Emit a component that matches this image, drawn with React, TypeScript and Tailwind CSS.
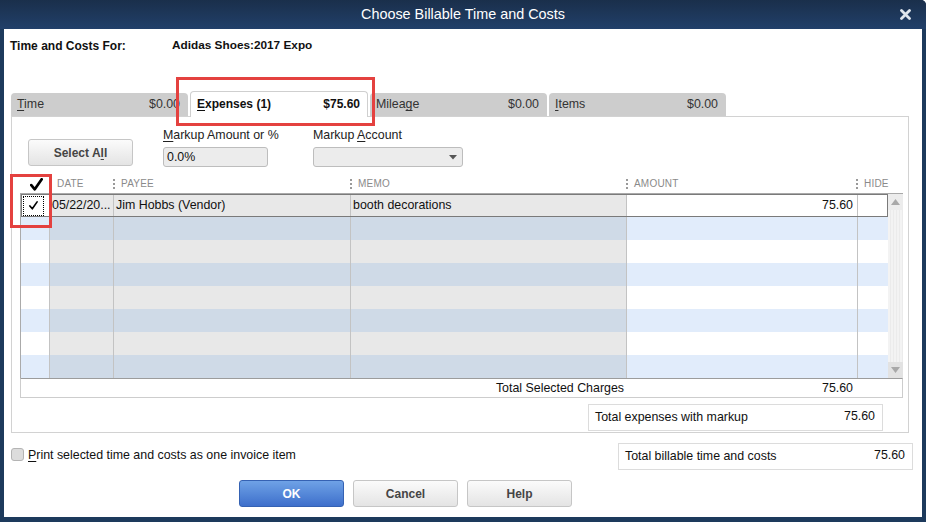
import React from "react";

const font = "font-['Liberation_Sans',Arial,sans-serif]";

const tabs = [
  { pre: "", key: "T", post: "ime", amount: "$0.00", active: false },
  { pre: "", key: "E", post: "xpenses (1)", amount: "$75.60", active: true },
  { pre: "Milea", key: "g", post: "e", amount: "$0.00", active: false },
  { pre: "", key: "I", post: "tems", amount: "$0.00", active: false },
];

function Check({ size = 12, weight = 2.4 }: { size?: number; weight?: number }) {
  return (
    <svg width={size} height={size} viewBox="0 0 12 12">
      <path d="M1.2 6.6 L4.4 10.4 L10.8 1.2" fill="none" stroke="#000" strokeWidth={weight} strokeLinecap="round" strokeLinejoin="round" />
    </svg>
  );
}

function HeadCell({ w, label }: { w: string; label: string }) {
  return (
    <div className={`${w} flex items-center h-full pb-[3px]`}>
      <div className="h-[10px] border-l-2 border-dotted border-[#9a9a9a]" />
      <span className="ml-[6px] text-[10px] text-[#8a8a8a] tracking-[0.2px]">{label}</span>
    </div>
  );
}

function Row({ i }: { i: number }) {
  const stripe = i % 2 === 1;
  const sel = i === 0;
  const side = stripe ? "bg-[#e1ecfb]" : "bg-white";
  const mid = stripe ? "bg-[#cfdae7]" : "bg-[#e8e8e8]";
  return (
    <div className={`flex h-[23px] text-[12.4px] text-[#111] ${sel ? "relative z-10 outline outline-[#7a7a7a] -outline-offset-1" : ""}`}>
      <div className={`w-[29px] border-r border-[#c3c3c3] ${side} flex items-center`}>
        {sel && (
          <div className="ml-[2px] w-[21px] h-[20px] border border-dotted border-black flex items-center justify-center">
            <Check size={9} weight={2.2} />
          </div>
        )}
      </div>
      <div className={`w-[64px] border-r border-[#c3c3c3] ${mid} pl-[2px] flex items-center whitespace-nowrap overflow-hidden`}>
        {sel ? "05/22/20..." : ""}
      </div>
      <div className={`w-[237px] border-r border-[#c3c3c3] ${mid} pl-[2px] flex items-center`}>
        {sel ? "Jim Hobbs (Vendor)" : ""}
      </div>
      <div className={`w-[276px] border-r border-[#c3c3c3] ${mid} pl-[2px] flex items-center`}>
        {sel ? "booth decorations" : ""}
      </div>
      <div className={`w-[231px] border-r border-[#c3c3c3] ${side} pr-[4px] flex items-center justify-end`}>
        {sel ? "75.60" : ""}
      </div>
      <div className={`w-[30px] ${side}`} />
    </div>
  );
}

function GrayButton({ children }: { children: React.ReactNode }) {
  return (
    <button className="w-[105px] h-[27px] rounded-[3px] border border-[#c6c6c6] bg-linear-to-b from-[#fbfbfb] to-[#e4e4e4] text-[12px] font-bold text-[#454545]">
      {children}
    </button>
  );
}

export default function App() {
  return (
    <div className={`${font} w-[926px] h-[522px] bg-[#1d3a5c] flex flex-col rounded-tr-[5px] overflow-hidden relative`}>
      {/* title bar */}
      <div className="h-[29px] bg-linear-to-b from-[#1a2f4b] to-[#21406a] flex items-center justify-center relative shrink-0">
        <span className="text-[14.4px] text-white">Choose Billable Time and Costs</span>
        <svg className="absolute right-[15px] top-[9px]" width="11" height="11" viewBox="0 0 11 11">
          <path d="M1.5 1.5 L9.5 9.5 M9.5 1.5 L1.5 9.5" stroke="#dfe5ec" strokeWidth="2.8" strokeLinecap="round" />
        </svg>
      </div>

      {/* body */}
      <div className="flex-1 mx-[4px] mb-[5px] bg-white flex flex-col pt-[9px] pl-[7px] text-[#111]">
        <div className="flex text-[12px] font-bold h-[15px] items-center -ml-[1px]">
          <span className="w-[162px]">Time and Costs For:</span>
          <span className="text-[11.8px]">Adidas Shoes:2017 Expo</span>
        </div>

        {/* tabs */}
        <div className="flex items-end gap-[2px] mt-[38px] h-[25px]">
          {tabs.map((t) =>
            t.active ? (
              <div
                key={t.post}
                className="relative z-10 -mb-[1px] w-[178px] h-[26px] bg-white border border-b-0 border-[#cfcfcf] rounded-t-[4px] flex items-center justify-between pl-[6px] pr-[7px] pb-[1px] text-[12px] font-bold"
              >
                <span>
                  {t.pre}
                  <span className="underline underline-offset-2">{t.key}</span>
                  {t.post}
                </span>
                <span>{t.amount}</span>
              </div>
            ) : (
              <div
                key={t.post}
                className="w-[177px] h-[23px] bg-[#cdcdcd] rounded-t-[4px] flex items-center justify-between pl-[6px] pr-[8px] text-[12.4px] text-[#333]"
              >
                <span>
                  {t.pre}
                  <span className="underline underline-offset-2">{t.key}</span>
                  {t.post}
                </span>
                <span>{t.amount}</span>
              </div>
            )
          )}
        </div>

        {/* panel */}
        <div className="w-[898px] border border-[#d2d2d2] pt-[11px] pb-[1px] flex flex-col">
          <div className="flex items-end pl-[16px] h-[39px]">
            <div className="mb-[1px]">
              <GrayButton>
                Select A<span className="underline underline-offset-2">l</span>l
              </GrayButton>
            </div>
            <div className="ml-[30px] w-[105px] flex flex-col">
              <span className="text-[12.4px] leading-[14px] text-[#222] whitespace-nowrap">
                <span className="underline underline-offset-2">M</span>arkup Amount or %
              </span>
              <div className="mt-[5px] w-[105px] h-[20px] bg-[#ececec] border border-[#bdbdbd] rounded-[3px] flex items-center pl-[3px] text-[12.4px]">
                0.0%
              </div>
            </div>
            <div className="ml-[45px] flex flex-col">
              <span className="text-[12.4px] leading-[14px] text-[#222]">
                Markup <span className="underline underline-offset-2">A</span>ccount
              </span>
              <div className="mt-[5px] w-[150px] h-[20px] bg-[#ececec] border border-[#bdbdbd] rounded-[3px] flex items-center justify-end pr-[5px]">
                <svg width="8" height="5" viewBox="0 0 8 5">
                  <path d="M0 0 L8 0 L4 4.5 Z" fill="#555" />
                </svg>
              </div>
            </div>
          </div>

          {/* table */}
          <div className="ml-[8px] mt-[10px] w-[883px] flex flex-col">
            <div className="flex h-[16px]">
              <div className="w-[29px] flex items-center justify-center pl-[3px] pb-[2px]">
                <Check size={13} weight={2.5} />
              </div>
              <HeadCell w="w-[64px]" label="DATE" />
              <HeadCell w="w-[237px]" label="PAYEE" />
              <HeadCell w="w-[276px]" label="MEMO" />
              <HeadCell w="w-[230px]" label="AMOUNT" />
              <HeadCell w="w-[47px]" label="HIDE" />
            </div>
            <div className="flex border-t border-[#a9a9a9]">
              <div className="w-[868px] border-l border-[#aaaaaa] flex flex-col">
                {[0, 1, 2, 3, 4, 5, 6, 7].map((i) => (
                  <Row key={i} i={i} />
                ))}
              </div>
              <div className="w-[15px] flex flex-col bg-[#f0f0f0]">
                <div className="h-[16px] flex items-center justify-center bg-[#ececec]">
                  <svg width="9" height="6" viewBox="0 0 9 6">
                    <path d="M0 6 L9 6 L4.5 0 Z" fill="#a8a8a8" />
                  </svg>
                </div>
                <div className="flex-1 bg-[repeating-linear-gradient(90deg,#f3f3f3_0px,#f3f3f3_2px,#ebebeb_2px,#ebebeb_3px)]" />
                <div className="h-[16px] flex items-center justify-center bg-[#e2e2e2]">
                  <svg width="9" height="6" viewBox="0 0 9 6">
                    <path d="M0 0 L9 0 L4.5 6 Z" fill="#a8a8a8" />
                  </svg>
                </div>
              </div>
            </div>
            <div className="flex h-[20px] border border-t-[#9c9c9c] border-[#cdcdcd] text-[12.4px] items-center">
              <div className="w-[605px] text-right pr-[2px]">Total Selected Charges</div>
              <div className="w-[231px] text-right pr-[4px]">75.60</div>
            </div>
          </div>

          <div className="flex justify-end pr-[25px] mt-[6px]">
            <div className="w-[295px] h-[27px] border border-[#dcdcdc] flex items-center justify-between pl-[6px] pr-[7px] text-[12.4px]">
              <span>Total expenses with markup</span>
              <span className="-mt-[3px]">75.60</span>
            </div>
          </div>
        </div>

        {/* below panel */}
        <div className="flex items-center justify-between mt-[10px] w-[902px]">
          <div className="flex items-center -mt-[3px]">
            <div className="w-[13px] h-[13px] rounded-[3px] bg-[#dcdcdc] border border-[#b4b4b4]" />
            <span className="ml-[4px] text-[12.4px]">
              <span className="underline underline-offset-2">P</span>rint selected time and costs as one invoice item
            </span>
          </div>
          <div className="w-[295px] h-[27px] border border-[#dcdcdc] flex items-center justify-between pl-[6px] pr-[7px] text-[12.4px]">
            <span>Total billable time and costs</span>
            <span className="-mt-[3px]">75.60</span>
          </div>
        </div>

        <div className="flex gap-[9px] mt-[10px] pl-[228px]">
          <button className="w-[105px] h-[27px] rounded-[3px] border border-[#3562b3] bg-linear-to-b from-[#6fa2e6] to-[#3e6fcb] text-[12px] font-bold text-white">
            OK
          </button>
          <GrayButton>Cancel</GrayButton>
          <GrayButton>Help</GrayButton>
        </div>
      </div>

      {/* red annotation boxes */}
      <div className="absolute left-[176px] top-[77px] w-[199px] h-[49px] border-[3px] border-[#e4413f] pointer-events-none z-20" />
      <div className="absolute left-[10px] top-[174px] w-[42px] h-[54px] border-[3px] border-[#e4413f] pointer-events-none z-20" />
    </div>
  );
}
